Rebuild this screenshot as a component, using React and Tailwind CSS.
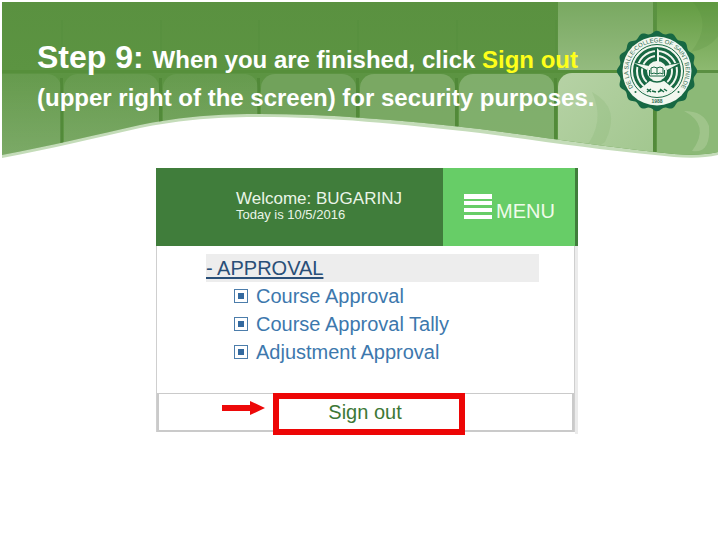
const SEAM_COLUMNS = [62, 161, 259, 358, 457, 556, 655];

function HeaderArt() {
  return (
    <svg
      className="absolute inset-0 h-full w-full"
      viewBox="0 0 720 160"
      preserveAspectRatio="none"
      aria-hidden="true"
    >
      <defs>
        <linearGradient id="base" x1="0" y1="0" x2="0" y2="1">
          <stop offset="0" stopColor="#5a9140" />
          <stop offset="0.45" stopColor="#5c9442" />
          <stop offset="1" stopColor="#609847" />
        </linearGradient>
        <linearGradient id="tile" x1="0" y1="0" x2="0" y2="1">
          <stop offset="0" stopColor="#fff" stopOpacity="0.06" />
          <stop offset="1" stopColor="#fff" stopOpacity="0.2" />
        </linearGradient>
        <linearGradient id="pale" x1="0" y1="0" x2="1" y2="1">
          <stop offset="0" stopColor="#b6d2a5" />
          <stop offset="1" stopColor="#a0c68d" />
        </linearGradient>
        <linearGradient id="upper" x1="0" y1="0" x2="0" y2="1">
          <stop offset="0" stopColor="#78a860" />
          <stop offset="1" stopColor="#94bb7f" />
        </linearGradient>
        <linearGradient id="corner" x1="0" y1="0" x2="0" y2="1">
          <stop offset="0" stopColor="#629b41" />
          <stop offset="1" stopColor="#8db970" />
        </linearGradient>
        <clipPath id="wave">
          <path d="M2 2H718V152C700 156 680 155 655 152C600 146 540 137 480 129C400 120 330 114 260 114C210 114 175 118 140 125C100 134 50 146 2 155Z" />
        </clipPath>
      </defs>
      <path
        d="M2 2H718V155C700 159 680 158 655 155C600 150 540 141 480 133C400 124 330 117 260 117C210 117 175 121 140 128C100 137 50 149 2 158Z"
        fill="#c4dcb9"
      />
      <g clipPath="url(#wave)">
        <rect width="720" height="160" fill="url(#base)" />
        <rect x="-34" y="74" width="95" height="100" rx="14" fill="url(#tile)" />
        <rect x="64" y="74" width="95" height="100" rx="14" fill="url(#tile)" />
        <rect x="163" y="74" width="95" height="100" rx="14" fill="url(#tile)" />
        <rect x="261" y="74" width="95" height="100" rx="14" fill="#86b073" opacity="0.5" />
        <rect x="360" y="74" width="95" height="100" rx="14" fill="#8db57a" opacity="0.6" />
        <rect x="459" y="74" width="95" height="100" rx="14" fill="#8cb77a" opacity="0.75" />
        <rect x="558" y="0" width="95" height="70" fill="url(#upper)" />
        <rect x="558" y="73" width="95" height="100" rx="14" fill="url(#pale)" />
        <rect x="657" y="0" width="64" height="70" fill="url(#corner)" />
        <rect x="657" y="73" width="64" height="100" fill="#8cb977" />
        <path d="M592 92Q622 108 605 142Q598 148 585 148Q606 122 592 92Z" fill="#7fae6a" opacity="0.2" />
        <path d="M691 0Q714 23 691 52Q726 45 724 10L712 0Z" fill="#538b3b" opacity="0.2" />
        <path d="M684 111Q711 125 692 151Q711 154 709 126Q704 111 684 111Z" fill="#b1d09e" opacity="0.5" />
        <rect x="2" y="70" width="654" height="3" fill="#4d8733" opacity="0.4" />
        <rect x="657" y="70" width="63" height="3" fill="#5a8d43" opacity="0.7" />
        {SEAM_COLUMNS.map((x) => (
          <g key={x} fill="#467e2e">
            <rect x={x - 1} y="20" width="2" height="50" opacity="0.1" />
            <rect x={x - 2} y="78" width="3" height="82" opacity="0.5" />
          </g>
        ))}
      </g>
    </svg>
  );
}

const SCALLOP = Array.from({ length: 193 }, (_, i) => {
  const angle = (i / 192) * Math.PI * 2;
  const radius = 38.8 + 1.4 * Math.cos(angle * 16);
  const x = 41 + radius * Math.sin(angle);
  const y = 41 - radius * Math.cos(angle);
  return `${i ? "L" : "M"}${x.toFixed(2)} ${y.toFixed(2)}`;
}).join("");

function Seal() {
  return (
    <svg
      className="h-[82px] w-[82px] shrink-0"
      viewBox="0 0 82 82"
      role="img"
      aria-label="De La Salle-College of Saint Benilde 1988"
    >
      <path d={SCALLOP} fill="#176843" />
      <circle cx="41" cy="41" r="34.5" fill="#f2f7ef" />
      <path id="motto" d="M23.3 63.6A28.7 28.7 0 1 1 58.7 63.6" fill="none" />
      <text
        fill="#2c6a4e"
        className="font-['Liberation_Sans',Arial,sans-serif] text-[6px]"
      >
        <textPath href="#motto" startOffset="50%" textAnchor="middle">
          DE LA SALLE-COLLEGE OF SAINT BENILDE
        </textPath>
      </text>
      <circle cx="41" cy="41" r="26.5" fill="#f2f7ef" stroke="#176843" strokeWidth="1" />
      <circle cx="41" cy="41" r="24" fill="#176843" />
      <g fill="none" stroke="#f2f7ef" strokeWidth="2">
        <circle cx="41" cy="41" r="20" />
        <circle cx="41" cy="41" r="15" />
      </g>
      <path
        d="M41 41V18M41 41L19 34M41 41L63 34M41 41L27 61M41 41L55 61"
        stroke="#176843"
        strokeWidth="4"
      />
      <g fill="#f2f7ef">
        <path d="M41 18L43 20V33H39.5L41 31ZM18 33L33 36L31 40ZM64 33L49 36L51 40Z" />
        <path d="M35 50L24 59Q32 66 41 66Q50 66 58 59L47 50Z" />
        <circle cx="41" cy="41" r="10" />
      </g>
      <path d="M34 50Q41 54 48 50" fill="none" stroke="#176843" strokeWidth="1.5" />
      <path
        d="M35 38Q38 36 41 38Q44 36 47 38V44Q44 42 41 44Q38 42 35 44ZM41 38V44M33.5 40V46H48.5V40"
        fill="#f2f7ef"
        stroke="#176843"
        strokeWidth="1"
      />
      <path
        d="M31 59L35 62M35 59L31 62M36 61L40 62M42 62L46 60M44 59L48 62M48 59L51 61"
        stroke="#176843"
        strokeWidth="1.5"
      />
      <circle cx="19.5" cy="62" r="1" fill="#176843" />
      <circle cx="62.5" cy="62" r="1" fill="#176843" />
      <text
        x="41"
        y="73"
        textAnchor="middle"
        fill="#2c6a4e"
        className="font-['Liberation_Sans',Arial,sans-serif] text-[5px] font-bold"
      >
        1988
      </text>
    </svg>
  );
}

function BoxedSquare() {
  return (
    <svg className="h-3.5 w-3.5 shrink-0" viewBox="0 0 14 14" aria-hidden="true">
      <rect x="0.5" y="0.5" width="13" height="13" fill="#fff" stroke="#4c7dab" />
      <rect x="4" y="4" width="6" height="6" fill="#33699f" />
    </svg>
  );
}

const APPROVAL_LINKS = ["Course Approval", "Course Approval Tally", "Adjustment Approval"];

export default function App() {
  return (
    <div className="min-h-screen bg-white font-['Liberation_Sans',Arial,sans-serif]">
      <header className="relative h-40">
        <HeaderArt />
        <div className="relative flex items-start justify-between pt-[30px] pr-[22px] pl-[37px]">
          <h1 className="pt-2 text-2xl leading-[38px] font-bold text-white">
            <span className="text-[32px]">Step 9: </span>
            When you are finished, click <span className="text-[#ffff1a]">Sign out</span>
            <br />
            (upper right of the screen) for security purposes.
          </h1>
          <Seal />
        </div>
      </header>

      <main className="mr-[142px] ml-[156px] pt-2">
        <div className="flex h-[78px] border-r-3 border-[#407d3b] bg-[#407d3b]">
          <div className="flex-1 pt-[21px] pl-20 text-[#eaf5e8]">
            <p className="text-[17px] leading-[19px]">Welcome: BUGARINJ</p>
            <p className="text-[13px] leading-[14px]">Today is 10/5/2016</p>
          </div>
          <button
            type="button"
            className="flex w-[132px] items-center gap-1 bg-[#67cd67] pl-[21px] text-xl text-[#effbea]"
          >
            <svg className="h-[26px] w-7" viewBox="0 0 28 26" aria-hidden="true">
              <path d="M0 0H28V5H0ZM0 7H28V11H0ZM0 14H28V18H0ZM0 21H28V25H0Z" fill="#fff" />
            </svg>
            <span className="pt-2">MENU</span>
          </button>
        </div>

        <div className="border-r-3 border-[#ebebeb] pb-0.5">
          <div className="border-x border-[#cfcfcf]">
            <nav className="h-[147px] pt-2 pr-[35px] pl-[49px] text-xl leading-7">
              <a
                href="#approval"
                className="block bg-[#ededed] text-[#294f78] underline decoration-2 underline-offset-2"
              >
                - APPROVAL
              </a>
              <ul className="pl-7 text-[#3d78ad]">
                {APPROVAL_LINKS.map((label) => (
                  <li key={label}>
                    <a href="#approval" className="flex items-center gap-2">
                      <BoxedSquare />
                      {label}
                    </a>
                  </li>
                ))}
              </ul>
            </nav>
            <div className="relative h-[39px] border-x-2 border-t border-b-2 border-[#cacaca]">
              <svg
                className="absolute top-[7px] left-[63px] h-3.5 w-[43px]"
                viewBox="0 0 43 14"
                aria-hidden="true"
              >
                <path d="M0 4H28V0L43 7L28 14V10H0Z" fill="#ed0909" />
              </svg>
              <button
                type="button"
                className="absolute -top-px left-[114px] h-[42px] w-48 border-6 border-[#ed0606] bg-white pr-2 pb-1 text-xl leading-[26px] text-[#3d7836]"
              >
                Sign out
              </button>
            </div>
          </div>
        </div>
      </main>
    </div>
  );
}
